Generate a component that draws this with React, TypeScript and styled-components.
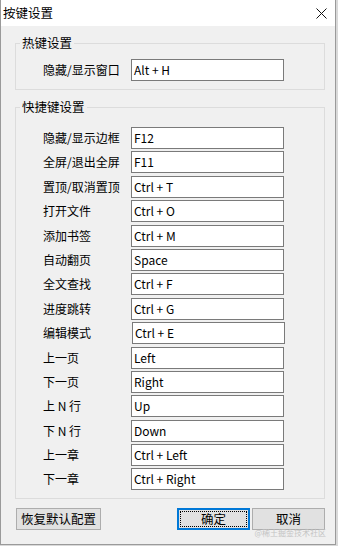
import React from "react";
import styled, { createGlobalStyle } from "styled-components";

const Global = createGlobalStyle`
  html, body { margin: 0; padding: 0; background: #d9d9d9; }
  body { font-family: "Noto Sans CJK SC", "Noto Sans", sans-serif; font-size: 12px; color: #000; }
  * { box-sizing: border-box; }
`;

const Window = styled.div`
  position: relative;
  width: 336px;
  height: 545px;
  background: #f0f0f0;
  border: 1px solid #9a9a9a;
  border-top: none;
  display: flex;
  flex-direction: column;
`;

const TitleBar = styled.div`
  height: 26px;
  background: #fff;
  display: flex;
  align-items: center;
  justify-content: space-between;
  padding: 0 8px 0 2px;
`;

const Title = styled.span`
  font-size: 12.5px;
  line-height: 16px;
`;

const Body = styled.div`
  flex: 1;
  padding: 9px 10px 0 14px;
  display: flex;
  flex-direction: column;
`;

const Group = styled.fieldset<{ $top?: number; $pt: number }>`
  margin: ${(p) => p.$top ?? 0}px 0 0 0;
  padding: ${(p) => p.$pt}px 0 8px 27px;
  border: 1px solid #dcdcdc;
  min-width: 0;
`;

const Legend = styled.legend`
  margin-left: -23px;
  padding: 0 2px;
  font-size: 12.5px;
  line-height: 16px;
`;

const Rows = styled.div`
  display: flex;
  flex-direction: column;
  row-gap: 2.4px;
`;

const Row = styled.div`
  display: flex;
  align-items: center;
  height: 22px;
`;

const Label = styled.span`
  width: 88px;
  line-height: 16px;
  white-space: nowrap;
`;

const KeyBox = styled.div<{ $shift?: number }>`
  width: 153px;
  height: 22px;
  margin-left: ${(p) => p.$shift ?? 0}px;
  background: #fff;
  border: 1px solid #7a7a7a;
  padding: 0 2px;
  display: flex;
  align-items: center;
  line-height: 16px;
  white-space: nowrap;
`;

const Footer = styled.div`
  display: flex;
  align-items: center;
  gap: 2px;
  margin-top: 9px;
  padding-left: 1px;
`;

const Button = styled.div<{ $w: number; $primary?: boolean }>`
  width: ${(p) => p.$w}px;
  height: 22px;
  background: #e1e1e1;
  border: 1px solid ${(p) => (p.$primary ? "#0078d7" : "#adadad")};
  box-shadow: ${(p) => (p.$primary ? "inset 0 0 0 1px #0078d7" : "none")};
  display: flex;
  align-items: center;
  justify-content: center;
  font-size: 12.5px;
  line-height: 16px;
  padding: 2px;
`;

const Focus = styled.div`
  flex: 1;
  align-self: stretch;
  border: 1px dotted #000;
  display: flex;
  align-items: center;
  justify-content: center;
`;

const Spacer = styled.div`
  flex: 1;
`;

const Watermark = styled.span`
  position: absolute;
  right: 9px;
  bottom: 6px;
  font-size: 8px;
  line-height: 10px;
  color: #c4c4c4;
`;

const CloseIcon = () => (
  <svg width="11" height="11" viewBox="0 0 11 11">
    <path d="M0.5 0.5 L10.5 10.5 M10.5 0.5 L0.5 10.5" stroke="#111" strokeWidth="1" fill="none" />
  </svg>
);

const shortcuts: [string, string, number?][] = [
  ["隐藏/显示边框", "F12"],
  ["全屏/退出全屏", "F11"],
  ["置顶/取消置顶", "Ctrl + T"],
  ["打开文件", "Ctrl + O"],
  ["添加书签", "Ctrl + M"],
  ["自动翻页", "Space"],
  ["全文查找", "Ctrl + F"],
  ["进度跳转", "Ctrl + G"],
  ["编辑模式", "Ctrl + E", 1],
  ["上一页", "Left"],
  ["下一页", "Right"],
  ["上 N 行", "Up"],
  ["下 N 行", "Down"],
  ["上一章", "Ctrl + Left"],
  ["下一章", "Ctrl + Right"],
];

export default function App() {
  return (
    <>
      <Global />
      <Window>
        <TitleBar>
          <Title>按键设置</Title>
          <CloseIcon />
        </TitleBar>
        <Body>
          <Group $pt={8}>
            <Legend>热键设置</Legend>
            <Row>
              <Label>隐藏/显示窗口</Label>
              <KeyBox>Alt + H</KeyBox>
            </Row>
          </Group>
          <Group $top={9} $pt={12}>
            <Legend>快捷键设置</Legend>
            <Rows>
              {shortcuts.map(([label, key, shift]) => (
                <Row key={label}>
                  <Label>{label}</Label>
                  <KeyBox $shift={shift}>{key}</KeyBox>
                </Row>
              ))}
            </Rows>
          </Group>
          <Footer>
            <Button $w={85}>恢复默认配置</Button>
            <Spacer />
            <Button $w={73} $primary>
              <Focus>确定</Focus>
            </Button>
            <Button $w={73}>取消</Button>
          </Footer>
        </Body>
        <Watermark>@稀土掘金技术社区</Watermark>
      </Window>
    </>
  );
}
